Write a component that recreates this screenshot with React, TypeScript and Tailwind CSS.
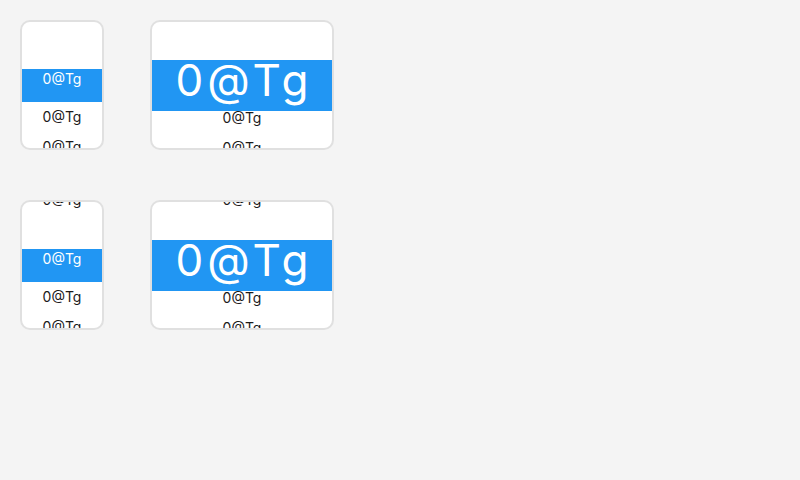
const font = { fontFamily: 'Inter, "Noto Sans", sans-serif' };

function Roller({ big, showPrev }: { big?: boolean; showPrev?: boolean }) {
  return (
    <div
      className={`${big ? 'w-[184px]' : 'w-[84px]'} h-[130px] bg-white border-2 border-[#e0e0e0] rounded-[10px] overflow-hidden flex flex-col`}
      style={font}
    >
      {/* lines above the selection */}
      <div className={`${big ? 'h-[38px]' : 'h-[47px]'} shrink-0 flex flex-col items-center`}>
        {showPrev && (
          <div className="mt-[-17px] text-[14px] leading-[30px] text-[#1b1b1b]">0@Tg</div>
        )}
      </div>
      {/* selected */}
      {big ? (
        <div className="h-[51px] shrink-0 bg-[#2196f3] flex justify-center">
          <div className="mt-[-10px] text-[44px] leading-[60px] text-white tracking-[4px] pl-[4px]">0@Tg</div>
        </div>
      ) : (
        <div className="h-[33px] shrink-0 bg-[#2196f3] flex justify-center">
          <div className="text-[14px] leading-[20px] text-white">0@Tg</div>
        </div>
      )}
      {/* lines below */}
      <div className={`${big ? 'mt-[-8px]' : ''} flex flex-col items-center text-[14px] leading-[30px] text-[#1b1b1b]`}>
        <div>0@Tg</div>
        <div>0@Tg</div>
      </div>
    </div>
  );
}

export default function App() {
  return (
    <div className="w-[800px] h-[480px] bg-[#f4f4f4] p-5">
      <div className="flex flex-col gap-[50px]">
        <div className="flex gap-[46px]">
          <Roller />
          <Roller big />
        </div>
        <div className="flex gap-[46px]">
          <Roller showPrev />
          <Roller big showPrev />
        </div>
      </div>
    </div>
  );
}
